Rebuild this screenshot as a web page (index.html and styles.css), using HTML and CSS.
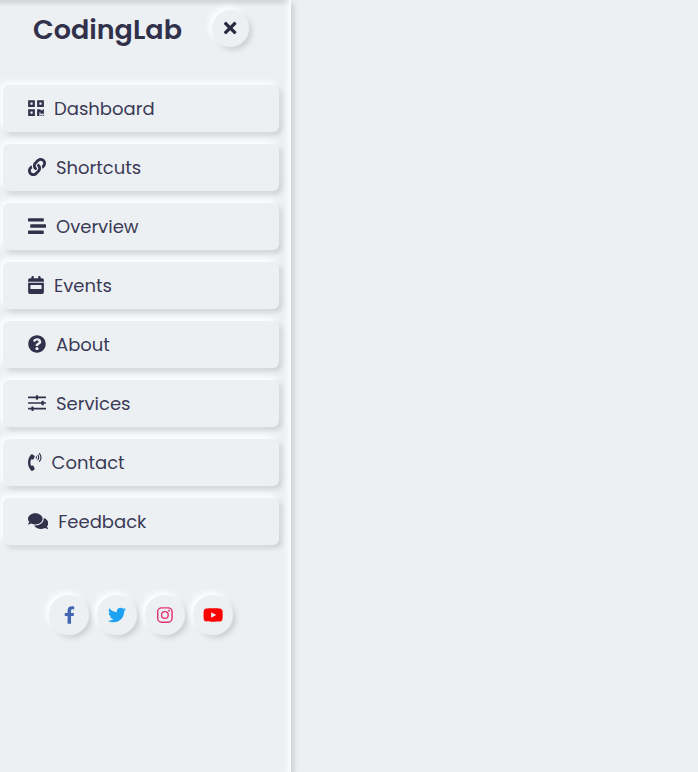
FILE: index.html
```
<!DOCTYPE html>
<html lang="en">
<head>
<meta charset="utf-8">
<title>CodingLab</title>
<link rel="stylesheet" href="styles.css">
</head>
<body>
<nav class="sidebar">
  <header class="brand">
    <h1>CodingLab</h1>
    <button class="close" aria-label="Close"><svg width="12.375" height="18" viewBox="0 0 352 512"><path d="M242.7 256l100.100-100.100c12.300-12.300 12.300-32.200 0-44.500l-22.200-22.200c-12.300-12.300-32.200-12.300-44.500 0L176 189.300 75.900 89.200c-12.300-12.300-32.200-12.300-44.500 0L9.200 111.500c-12.300 12.300-12.300 32.200 0 44.500L109.300 256 9.200 356.100c-12.300 12.300-12.300 32.200 0 44.500l22.200 22.200c12.300 12.300 32.200 12.300 44.500 0L176 322.700l100.100 100.100c12.300 12.300 32.200 12.300 44.500 0l22.200-22.200c12.300-12.300 12.300-32.200 0-44.500L242.700 256z"/></svg></button>
  </header>
  <ul class="menu">
    <li><a><svg width="16" height="18" viewBox="0 0 448 512"><path fill-rule="evenodd" d="M0 224h192V32H0v192zM64 96h64v64H64V96zm192-64v192h192V32H256zm128 128h-64V96h64v64zM0 480h192V288H0v192zm64-128h64v64H64v-64zm352-64h32v128h-96v-32h-32v96h-64V288h96v32h64v-32zm0 160h32v32h-32v-32zm-64 0h32v32h-32v-32z"/></svg><span>Dashboard</span></a></li>
    <li><a><svg width="18" height="18" viewBox="0 0 512 512"><path d="M326.612 185.391c59.747 59.809 58.927 155.698.36 214.590-.11.120-.240.250-.36.370l-67.200 67.200c-59.270 59.270-155.699 59.262-214.960 0-59.270-59.260-59.270-155.700 0-214.960l37.106-37.106c9.840-9.840 26.786-3.300 27.294 10.606.648 17.722 3.826 35.527 9.690 52.721 1.986 5.822.567 12.262-3.783 16.612l-13.087 13.087c-28.026 28.026-28.905 73.660-1.155 101.960 28.024 28.579 74.086 28.749 102.325.510l67.200-67.190c28.191-28.191 28.073-73.757 0-101.830-3.701-3.694-7.429-6.564-10.341-8.569a16.037 16.037 0 0 1-6.947-12.606c-.396-10.567 3.348-21.456 11.698-29.806l21.054-21.055c5.521-5.521 14.182-6.199 20.584-1.731a152.482 152.482 0 0 1 20.522 17.197zM467.547 44.449c-59.261-59.262-155.690-59.270-214.960 0l-67.200 67.200c-.12.120-.25.250-.36.370-58.566 58.892-59.387 154.781.36 214.590a152.454 152.454 0 0 0 20.521 17.196c6.402 4.468 15.064 3.789 20.584-1.731l21.054-21.055c8.350-8.350 12.094-19.239 11.698-29.806a16.037 16.037 0 0 0-6.947-12.606c-2.912-2.005-6.640-4.875-10.341-8.569-28.073-28.073-28.191-73.639 0-101.830l67.200-67.190c28.239-28.239 74.300-28.069 102.325.510 27.750 28.300 26.872 73.934-1.155 101.960l-13.087 13.087c-4.350 4.350-5.769 10.790-3.783 16.612 5.864 17.194 9.042 34.999 9.690 52.721.509 13.906 17.454 20.446 27.294 10.606l37.106-37.106c59.271-59.259 59.271-155.699.001-214.959z"/></svg><span>Shortcuts</span></a></li>
    <li><a><svg width="18" height="18" viewBox="0 0 512 512"><path d="M16 128h416a16 16 0 0 0 16-16V48a16 16 0 0 0-16-16H16A16 16 0 0 0 0 48v64a16 16 0 0 0 16 16zm480 80H80a16 16 0 0 0-16 16v64a16 16 0 0 0 16 16h416a16 16 0 0 0 16-16v-64a16 16 0 0 0-16-16zm-64 176H16a16 16 0 0 0-16 16v64a16 16 0 0 0 16 16h416a16 16 0 0 0 16-16v-64a16 16 0 0 0-16-16z"/></svg><span>Overview</span></a></li>
    <li><a><svg width="16" height="18" viewBox="0 0 448 512"><path fill-rule="evenodd" d="M0 160v-48a48 48 0 0 1 48-48h48V12A12 12 0 0 1 108 0h40a12 12 0 0 1 12 12v52h128V12a12 12 0 0 1 12-12h40a12 12 0 0 1 12 12v52h48a48 48 0 0 1 48 48v48zM0 192h448v272a48 48 0 0 1-48 48H48a48 48 0 0 1-48-48zm64 80v80a16 16 0 0 0 16 16h288a16 16 0 0 0 16-16v-80a16 16 0 0 0-16-16H80a16 16 0 0 0-16 16z"/></svg><span>Events</span></a></li>
    <li><a><svg width="18" height="18" viewBox="0 0 512 512"><path d="M504 256c0 136.997-111.043 248-248 248S8 392.997 8 256C8 119.083 119.043 8 256 8s248 111.083 248 248zM262.655 90c-54.497 0-89.255 22.957-116.549 63.758-3.536 5.286-2.353 12.415 2.715 16.258l34.699 26.310c5.205 3.947 12.621 3.008 16.665-2.122 17.864-22.658 30.113-35.797 57.303-35.797 20.429 0 45.698 13.148 45.698 32.958 0 14.976-12.363 22.667-32.534 33.976C247.128 238.528 216 254.941 216 296v4c0 6.627 5.373 12 12 12h56c6.627 0 12-5.373 12-12v-1.333c0-28.462 83.186-29.647 83.186-106.667 0-58.002-60.165-102-116.531-102zM256 338c-25.365 0-46 20.635-46 46 0 25.364 20.635 46 46 46s46-20.636 46-46c0-25.365-20.635-46-46-46z"/></svg><span>About</span></a></li>
    <li><a><svg width="18" height="18" viewBox="0 0 512 512"><path d="M496 72H288V48a16 16 0 0 0-16-16h-32a16 16 0 0 0-16 16v24H16A16 16 0 0 0 0 88v16a16 16 0 0 0 16 16h208v24a16 16 0 0 0 16 16h32a16 16 0 0 0 16-16v-24h208a16 16 0 0 0 16-16V88a16 16 0 0 0-16-16zm0 160h-48v-24a16 16 0 0 0-16-16h-32a16 16 0 0 0-16 16v24H16a16 16 0 0 0-16 16v16a16 16 0 0 0 16 16h368v24a16 16 0 0 0 16 16h32a16 16 0 0 0 16-16v-24h48a16 16 0 0 0 16-16v-16a16 16 0 0 0-16-16zm0 160H160v-24a16 16 0 0 0-16-16h-32a16 16 0 0 0-16 16v24H16a16 16 0 0 0-16 16v16a16 16 0 0 0 16 16h80v24a16 16 0 0 0 16 16h32a16 16 0 0 0 16-16v-24h336a16 16 0 0 0 16-16v-16a16 16 0 0 0-16-16z"/></svg><span>Services</span></a></li>
    <li><a><svg width="13.500" height="18" viewBox="0 0 384 512"><path d="M97.333 506.966c-129.874-129.874-129.681-340.252 0-469.933 5.698-5.698 14.527-6.632 21.263-2.422l64.817 40.513a17.187 17.187 0 0 1 6.849 20.958l-32.408 81.021a17.188 17.188 0 0 1-17.669 10.719l-55.810-5.580c-21.051 58.261-20.612 122.471 0 179.515l55.811-5.581a17.188 17.188 0 0 1 17.669 10.719l32.408 81.022a17.188 17.188 0 0 1-6.849 20.958l-64.817 40.513a17.190 17.190 0 0 1-21.264-2.422zM247.126 95.473c11.832 20.047 11.832 45.008 0 65.055-3.950 6.693-13.108 7.959-18.718 2.581l-5.975-5.726c-3.911-3.748-4.793-9.622-2.261-14.410a32.063 32.063 0 0 0 0-29.945c-2.533-4.788-1.650-10.662 2.261-14.410l5.975-5.726c5.610-5.378 14.768-4.112 18.718 2.581zm91.787-91.187c60.140 71.604 60.092 175.882 0 247.428-4.474 5.327-12.530 5.746-17.552.933l-5.798-5.557c-4.560-4.371-4.977-11.529-.930-16.379 49.687-59.538 49.646-145.933 0-205.422-4.047-4.850-3.631-12.008.930-16.379l5.798-5.557c5.022-4.813 13.078-4.394 17.552.933zm-45.972 44.941c36.050 46.322 36.108 111.149 0 157.546-4.390 5.641-12.697 6.251-17.856 1.304l-5.818-5.579c-4.400-4.219-4.998-11.095-1.285-15.931 26.536-34.564 26.534-82.572 0-117.134-3.713-4.836-3.115-11.711 1.285-15.931l5.818-5.579c5.159-4.947 13.466-4.337 17.856 1.304z"/></svg><span>Contact</span></a></li>
    <li><a><svg width="20.250" height="18" viewBox="0 0 576 512"><path d="M416 192c0-88.400-93.100-160-208-160S0 103.600 0 192c0 34.300 14.100 65.900 38 92-13.400 30.200-35.500 54.200-35.800 54.500-2.200 2.300-2.800 5.700-1.500 8.700S4.800 352 8 352c36.600 0 66.900-12.300 88.700-25 32.200 15.700 70.300 25 111.300 25 114.900 0 208-71.600 208-160zm122 220c23.900-26 38-57.700 38-92 0-66.900-53.500-124.200-129.300-148.100.9 6.600 1.300 13.300 1.300 20.100 0 105.900-107.700 192-240 192-10.800 0-21.300-.8-31.700-1.900C207.800 439.600 281.800 480 368 480c41 0 79.100-9.200 111.300-25 21.800 12.700 52.100 25 88.700 25 3.200 0 6.100-1.900 7.300-4.800 1.300-2.900.7-6.300-1.500-8.700-.3-.3-22.400-24.200-35.800-54.500z"/></svg><span>Feedback</span></a></li>
  </ul>
  <div class="social">
    <a class="facebook"><svg width="11" height="18" viewBox="0 0 320 512"><path d="M279.140 288l14.220-92.660h-88.910v-60.130c0-25.350 12.420-50.060 52.240-50.060h40.420V6.260S260.430 0 225.360 0c-73.220 0-121.080 44.380-121.080 124.720v70.620H22.890V288h81.390v224h100.170V288z"/></svg></a>
    <a class="twitter"><svg width="18" height="18" viewBox="0 0 512 512"><path d="M459.370 151.716c.325 4.548.325 9.097.325 13.645 0 138.720-105.583 298.558-298.558 298.558-59.452 0-114.680-17.219-161.137-47.106 8.447.974 16.568 1.299 25.340 1.299 49.055 0 94.213-16.568 130.274-44.832-46.132-.975-84.792-31.188-98.112-72.772 6.498.974 12.995 1.624 19.818 1.624 9.421 0 18.843-1.300 27.614-3.573-48.081-9.747-84.143-51.980-84.143-102.985v-1.299c13.969 7.797 30.214 12.670 47.431 13.319-28.264-18.843-46.781-51.005-46.781-87.391 0-19.492 5.197-37.360 14.294-52.954 51.655 63.675 129.300 105.258 216.365 109.807-1.624-7.797-2.599-15.918-2.599-24.040 0-57.828 46.782-104.934 104.934-104.934 30.213 0 57.502 12.670 76.670 33.137 23.715-4.548 46.456-13.320 66.599-25.340-7.798 24.366-24.366 44.833-46.132 57.827 21.117-2.273 41.584-8.122 60.426-16.243-14.292 20.791-32.161 39.308-52.628 54.253z"/></svg></a>
    <a class="instagram"><svg width="15.750" height="18" viewBox="0 0 448 512"><path fill-rule="evenodd" d="M132 32h184A132 132 0 0 1 448 164v184A132 132 0 0 1 316 480H132A132 132 0 0 1 0 348V164A132 132 0 0 1 132 32zm2 40A94 94 0 0 0 40 166v180a94 94 0 0 0 94 94h180a94 94 0 0 0 94-94V166a94 94 0 0 0-94-94zM224 141a115 115 0 1 1 0 230 115 115 0 0 1 0-230zm0 40a75 75 0 1 0 0 150 75 75 0 0 0 0-150zM343.500 109.500a27 27 0 1 1 0 54 27 27 0 0 1 0-54z"/></svg></a>
    <a class="youtube"><svg width="20.250" height="18" viewBox="0 0 576 512"><path fill-rule="evenodd" d="M549.655 124.083c-6.281-23.650-24.787-42.276-48.284-48.597C458.781 64 288 64 288 64S117.220 64 74.629 75.486c-23.497 6.322-42.003 24.947-48.284 48.597-11.412 42.867-11.412 132.305-11.412 132.305s0 89.438 11.412 132.305c6.281 23.650 24.787 41.500 48.284 47.821C117.220 448 288 448 288 448s170.780 0 213.371-11.486c23.497-6.321 42.003-24.171 48.284-47.821 11.412-42.867 11.412-132.305 11.412-132.305s0-89.438-11.412-132.305zM232.145 337.591V175.185l142.739 81.205z"/></svg></a>
  </div>
</nav>
</body>
</html>
```
FILE: styles.css
```
* { box-sizing: border-box; margin: 0; padding: 0; }
body {
  height: 100vh;
  overflow: hidden;
  background: #ecf0f3;
  color: #31314b;
  font-family: Poppins, Inter, sans-serif;
}
svg { display: block; fill: currentColor; flex: none; }
.sidebar {
  width: 291px;
  height: 100vh;
  padding: 9px 12px 0 3px;
  box-shadow: inset -8px 0 7px -5px #fff, inset 0 8px 5px -5px #ceced1, 3px 3px 5px #ceced1;
}
.brand { display: flex; height: 38px; padding-left: 30px; }
.brand h1 {
  width: 179px;
  font-size: 27px;
  line-height: 41px;
  font-weight: 600;
}
.close, .social a {
  display: flex;
  align-items: center;
  justify-content: center;
  border: 0;
  border-radius: 50%;
  background: #ecf0f3;
  box-shadow: -3px -3px 7px #fff, 3px 3px 5px #ceced1;
}
.close { width: 37px; height: 37px; margin-top: 1px; padding-bottom: 1px; color: #2a293f; }
.menu { display: grid; gap: 12px; margin-top: 38px; list-style: none; }
.menu a {
  display: flex;
  align-items: center;
  gap: 10px;
  height: 47px;
  padding-left: 25px;
  border-radius: 6px;
  font-size: 18px;
  line-height: 27px;
  box-shadow: -3px -3px 7px #fff, 3px 3px 5px #ceced1;
}
.menu svg { margin-bottom: 1px; }
.menu span { color: #3b3a56; }
.social { display: flex; gap: 8px; margin: 50px 0 0 46px; }
.social a { width: 40px; height: 40px; padding-bottom: 1px; }
.social .facebook { padding-left: 1px; }
.facebook { color: #4267b2; }
.twitter { color: #1da1f2; }
.instagram { color: #e1306c; }
.youtube { color: #f00; }
```
